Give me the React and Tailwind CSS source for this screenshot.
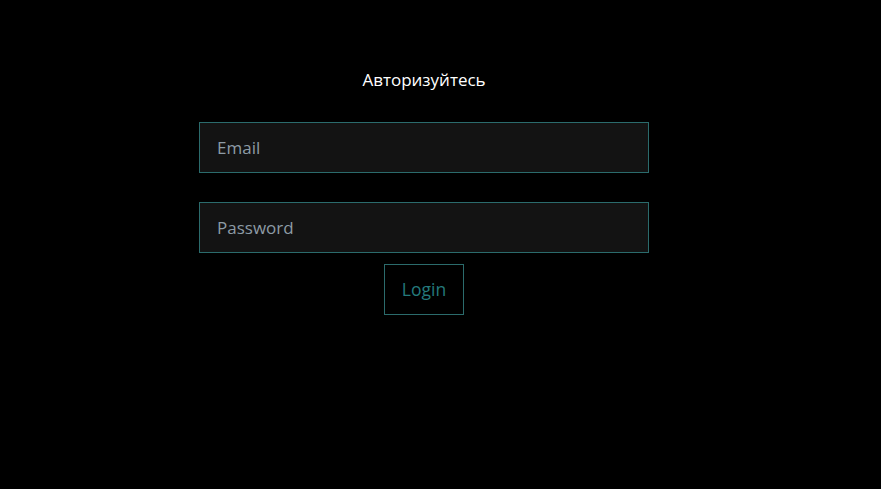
export default function App() {
  return (
    <div className="min-h-[489px] w-full bg-black" style={{ fontFamily: '"Open Sans", "Noto Sans", sans-serif' }}>
      <div className="ml-[199px] flex w-[450px] flex-col items-center pt-[68px]">
        <h1 className="text-[17px] leading-[24px] text-white">Авторизуйтесь</h1>
        <input
          className="mt-[30px] box-border h-[51px] w-[450px] border border-[#2b6b6c] bg-[#131313] px-[17px] text-[17px] text-[#9aa6ad] outline-none placeholder:text-[#8d9ba5]"
          placeholder="Email"
        />
        <input
          className="mt-[29px] box-border h-[51px] w-[450px] border border-[#2b6b6c] bg-[#131313] px-[17px] text-[17px] text-[#9aa6ad] outline-none placeholder:text-[#8d9ba5]"
          placeholder="Password"
          type="password"
        />
        <button className="mt-[11px] box-border h-[51px] w-[80px] border border-[#2b6b6c] bg-black text-[17.5px] text-[#247a7c]">
          Login
        </button>
      </div>
    </div>
  );
}
